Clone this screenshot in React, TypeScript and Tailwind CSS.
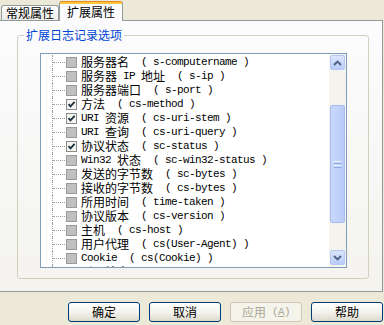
import React from "react";

const items: [string, boolean][] = [
  ["服务器名  ( s-computername )", false],
  ["服务器 IP 地址  ( s-ip )", false],
  ["服务器端口  ( s-port )", false],
  ["方法  ( cs-method )", true],
  ["URI 资源  ( cs-uri-stem )", true],
  ["URI 查询  ( cs-uri-query )", false],
  ["协议状态  ( sc-status )", true],
  ["Win32 状态  ( sc-win32-status )", false],
  ["发送的字节数  ( sc-bytes )", false],
  ["接收的字节数  ( cs-bytes )", false],
  ["所用时间  ( time-taken )", false],
  ["协议版本  ( cs-version )", false],
  ["主机  ( cs-host )", false],
  ["用户代理  ( cs(User-Agent) )", false],
  ["Cookie  ( cs(Cookie) )", false],
  ["引用站点  ( cs(Referer) )", false],
];

function Mixed({ text }: { text: string }) {
  const parts = text.match(/[\x00-\x7F]+|[^\x00-\x7F]+/g) || [];
  return (
    <>
      {parts.map((p, i) =>
        /^[\x00-\x7F]/.test(p) ? (
          <span key={i} className="font-['Liberation_Mono',monospace] text-[11px] tracking-[-0.6px]">
            {p}
          </span>
        ) : (
          <span key={i}>{p}</span>
        )
      )}
    </>
  );
}

function Check({ checked }: { checked: boolean }) {
  return checked ? (
    <div className="w-[11px] h-[11px] shrink-0 border border-[#8a8a8a] bg-[#f4f4f0] flex items-center justify-center">
      <svg width="9" height="9" viewBox="0 0 9 9">
        <path d="M1.5 4.2 L3.5 6.4 L7.6 1.8" fill="none" stroke="#1f2f3f" strokeWidth="1.8" />
      </svg>
    </div>
  ) : (
    <div className="w-[11px] h-[11px] shrink-0 border border-[#9a9a9a] bg-[#c0c0c0]" />
  );
}

function Arrow({ up }: { up: boolean }) {
  return (
    <svg width="9" height="6" viewBox="0 0 9 6">
      <path
        d={up ? "M1 5 L4.5 1.5 L8 5" : "M1 1 L4.5 4.5 L8 1"}
        fill="none"
        stroke="#4d6185"
        strokeWidth="1.8"
      />
    </svg>
  );
}

function Button({ children, disabled }: { children: React.ReactNode; disabled?: boolean }) {
  return (
    <div
      className={
        disabled
          ? "w-[72px] h-[20px] rounded-[3px] border border-[#c9c7ba] bg-[#f5f4ea] text-[#aca899] flex items-center justify-center text-[12px] leading-none whitespace-pre"
          : "w-[72px] h-[20px] rounded-[3px] border border-[#003c74] bg-gradient-to-b from-white via-[#f4f3ee] to-[#dcd9cd] text-black flex items-center justify-center text-[12px] leading-none whitespace-pre"
      }
    >
      {children}
    </div>
  );
}

export default function App() {
  return (
    <div className="w-[384px] h-[325px] bg-[#ece9d8] overflow-hidden font-['Noto_Sans_CJK_SC',sans-serif] text-[12px] text-black">
      {/* tabs */}
      <div className="h-[20px] flex items-end pl-[1px]">
        <div className="w-[58px] h-[15px] border border-b-0 border-[#919b9c] rounded-t-[3px] bg-gradient-to-b from-white to-[#ecebe6] flex items-center justify-center leading-none">
          常规属性
        </div>
        <div className="relative z-10 -mb-px w-[64px] h-[20px] border-x border-[#919b9c] rounded-t-[3px] bg-[#fcfcfe] flex flex-col">
          <div className="h-[1px] bg-[#e68b2c] rounded-t-[3px]" />
          <div className="h-[2px] bg-[#ffc73c]" />
          <div className="flex-1 flex items-center justify-center leading-none pb-[2px]">扩展属性</div>
        </div>
      </div>
      {/* panel */}
      <div className="w-[383px] h-[272px] border border-l-0 border-[#919b9c] bg-gradient-to-b from-[#fcfcfe] to-[#f4f3ee] pl-[17px] pt-[14px]">
        <div className="relative w-[352px] h-[244px] border border-[#d0d0bf] rounded-[3px] pl-[22px] pt-[17px]">
          <span className="absolute left-[6px] top-[-9px] px-[2px] bg-[#fbfbfb] text-[#0046d5] leading-[16px]">
            扩展日志记录选项
          </span>
          <div className="w-[307px] h-[215px] border border-[#7f9db9] bg-white flex">
            <div className="flex-1 overflow-hidden pt-[1px]">
              {items.map(([t, c], i) => (
                <div key={i} className="h-[14px] flex items-stretch pl-[11px] whitespace-pre leading-[14px]">
                  <div className="w-[13px] shrink-0 border-l border-dotted border-[#a0a0a0] flex items-center">
                    <div className="w-full border-t border-dotted border-[#a0a0a0]" />
                  </div>
                  <div className="flex items-center ml-[1px]">
                    <Check checked={c} />
                  </div>
                  <div className="ml-[4px] flex items-center">
                    <Mixed text={t} />
                  </div>
                </div>
              ))}
            </div>
            <div className="w-[17px] bg-[#f4f3ee] flex flex-col pt-[1px] px-[1px]">
              <div className="h-[15px] rounded-[2px] border border-[#b5c8f5] bg-gradient-to-b from-[#dbe5fd] to-[#b9cdf9] flex items-center justify-center">
                <Arrow up />
              </div>
              <div className="h-[35px]" />
              <div className="h-[118px] rounded-[2px] border border-[#a7bdf0] bg-gradient-to-r from-[#cad8fc] to-[#b8cbf8] flex flex-col items-center justify-center gap-[1px]">
                <div className="w-[7px] h-[1px] bg-[#eef3fe]" />
                <div className="w-[7px] h-[1px] bg-[#8faae8]" />
                <div className="w-[7px] h-[1px] bg-[#eef3fe]" />
                <div className="w-[7px] h-[1px] bg-[#8faae8]" />
              </div>
              <div className="h-[27px]" />
              <div className="h-[15px] rounded-[2px] border border-[#b5c8f5] bg-gradient-to-b from-[#dbe5fd] to-[#b9cdf9] flex items-center justify-center">
                <Arrow up={false} />
              </div>
            </div>
          </div>
        </div>
      </div>
      {/* buttons */}
      <div className="mt-[10px] flex justify-end gap-[9px] pr-[1px]">
        <Button>确定</Button>
        <Button>取消</Button>
        <Button disabled>
          <span>应用</span>
          <span className="font-['Liberation_Mono',monospace] text-[11px] tracking-[-0.6px] whitespace-pre">
            {" ("}
            <span className="underline">A</span>
            {")"}
          </span>
        </Button>
        <Button>帮助</Button>
      </div>
    </div>
  );
}
